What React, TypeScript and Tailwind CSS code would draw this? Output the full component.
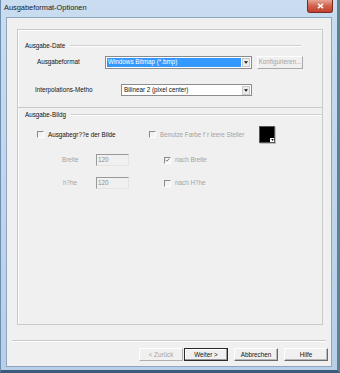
import React from "react";

const font = "font-['Liberation_Sans',Arial,sans-serif]";

function Check({ checked = false }: { checked?: boolean }) {
  return (
    <span className="relative w-[7px] h-[7px] shrink-0 border border-t-[#8a8a8a] border-l-[#8a8a8a] border-b-white border-r-white bg-[#f3f3f3] flex items-center justify-center">
      {checked && (
        <svg viewBox="0 0 6 6" className="w-[6px] h-[6px]">
          <path d="M0.8 2.8 L2.3 4.4 L5.3 1.2" stroke="#7a7a7a" strokeWidth="1.1" fill="none" />
        </svg>
      )}
    </span>
  );
}

function Field({ value }: { value: string }) {
  return (
    <div className="w-[33px] h-[12px] border border-t-[#9a9a9a] border-l-[#9a9a9a] border-b-[#e4e4e4] border-r-[#e4e4e4] bg-[#f0f0f0] flex items-center pl-[1px] text-[6.3px] text-[#8c8c8c]">
      {value}
    </div>
  );
}

function Arrow() {
  return (
    <div className="w-[8px] h-[9px] mr-[1px] bg-[#ececec] border border-[#c8c8c8] flex items-center justify-center shrink-0">
      <svg viewBox="0 0 5 3" className="w-[4px] h-[3px]">
        <path d="M0 0 H5 L2.5 3 Z" fill="#111" />
      </svg>
    </div>
  );
}

function Btn({ label, disabled = false, def = false }: { label: string; disabled?: boolean; def?: boolean }) {
  return (
    <div
      className={`w-[44px] h-[13px] flex items-center justify-center text-[6.3px] border ${
        def
          ? "border-[#2a2a2a] shadow-[inset_-1px_-1px_0_#9a9a9a,inset_1px_1px_0_#fff]"
          : "border-t-white border-l-white border-b-[#6a6a6a] border-r-[#6a6a6a] shadow-[inset_-1px_-1px_0_#b8b8b8]"
      } ${disabled ? "text-[#a3a3a3] border-b-[#b0b0b0] border-r-[#b0b0b0] shadow-none" : "text-[#111]"} bg-[#f0f0f0]`}
    >
      {label}
    </div>
  );
}

export default function App() {
  return (
    <div className={`${font} w-[340px] h-[373px] flex flex-col bg-gradient-to-b from-[#c9dcf0] to-[#b8cfe8] border-l border-l-[#6f8fb0] border-r-[3px] border-r-[#5f7f92] border-b-[3px] border-b-[#3d5a7c]`}>
      {/* Title bar */}
      <div className="h-[17px] flex shrink-0">
        <span className="pl-[3px] pt-[4px] text-[7.4px] text-[#1a1a1a] leading-none">Ausgabeformat-Optionen</span>
        <div className="ml-auto mr-[4px] w-[26px] h-[13px] rounded-b-[3px] border border-t-0 border-[#7a2a22] bg-gradient-to-b from-[#e7a596] via-[#d0604a] to-[#c2412d] flex items-center justify-center">
          <svg viewBox="0 0 8 7" className="w-[7px] h-[6px]">
            <path d="M1 1 L7 6 M7 1 L1 6" stroke="#fff" strokeWidth="1.6" />
          </svg>
        </div>
      </div>

      {/* Client area */}
      <div className="flex-1 flex px-[5px] pb-[3px]">
        <div className="flex-1 bg-[#f0f0f0] border border-[#8ea6c0] flex flex-col">
          {/* Page panel */}
          <div className="mt-[11px] ml-[10px] w-[306px] h-[296px] border border-[#c9c9c9] shadow-[inset_1px_1px_0_#fff] flex flex-col text-[6.3px] text-[#111]">
            {/* Ausgabe-Date */}
            <div className="h-[78px] border-b border-[#c9c9c9] flex flex-col">
              <div className="mt-[11px] h-[10px] flex items-center pl-[7px] pr-[21px]">
                <span>Ausgabe-Date</span>
                <div className="flex-1 ml-[5px] h-[2px] border-t border-[#d0d0d0] border-b-white border-b" />
              </div>
              <div className="mt-[4px] h-[14px] flex items-center">
                <span className="pl-[19px] w-[87px]">Ausgabeformat</span>
                <div className="w-[147px] h-[13px] bg-white border border-[#8c8c8c] flex items-center">
                  <div className="flex-1 h-[9px] ml-[1px] mr-[1px] bg-[#3399ff] text-white flex items-center pl-[1px]">
                    Windows Bitmap (*.bmp)
                  </div>
                  <Arrow />
                </div>
                <div className="ml-[5px] w-[46px] h-[13px] border border-t-white border-l-white border-b-[#a8a8a8] border-r-[#a8a8a8] text-[#a3a3a3] flex items-center justify-center">
                  Konfigurieren...
                </div>
              </div>
              <div className="mt-[15px] h-[12px] flex items-center">
                <span className="pl-[17px] w-[103px]">Interpolations-Metho</span>
                <div className="w-[131px] h-[12px] bg-white border border-[#8c8c8c] flex items-center">
                  <span className="flex-1 pl-[2px]">Bilinear 2 (pixel center)</span>
                  <Arrow />
                </div>
              </div>
            </div>

            {/* Ausgabe-Bildg */}
            <div className="flex-1 flex flex-col">
              <div className="mt-[2px] h-[10px] flex items-center pl-[7px]">
                <span>Ausgabe-Bildg</span>
                <div className="flex-1 ml-[5px] h-[2px] border-t border-[#d0d0d0] border-b-white border-b" />
              </div>
              <div className="mt-[6px] h-[17px] flex items-center">
                <div className="ml-[19px] w-[112px] flex items-center gap-[4px]">
                  <Check />
                  <span>Ausgabegr??e der Bilde</span>
                </div>
                <div className="w-[110px] flex items-center gap-[4px] text-[#a3a3a3]">
                  <Check />
                  <span>Benutze Farbe f¨r leere Steller</span>
                </div>
                <div className="relative w-[16px] h-[17px] bg-black border border-[#555] shadow-[1px_1px_0_#bdbdbd]">
                  <span className="absolute right-[0px] bottom-[0px] w-[4px] h-[4px] bg-white flex items-center justify-center">
                    <svg viewBox="0 0 4 3" className="w-[3px] h-[2px]">
                      <path d="M0 0 H4 L2 3 Z" fill="#000" />
                    </svg>
                  </span>
                </div>
              </div>
              <div className="mt-[11px] h-[12px] flex items-center">
                <span className="pl-[44px] w-[78px] text-[#a3a3a3]">Breite</span>
                <Field value="120" />
                <div className="ml-[35px] flex items-center gap-[4px] text-[#a3a3a3]">
                  <Check checked />
                  <span>nach Breite</span>
                </div>
              </div>
              <div className="mt-[11px] h-[12px] flex items-center">
                <span className="pl-[45px] w-[78px] text-[#a3a3a3]">h?he</span>
                <Field value="120" />
                <div className="ml-[35px] flex items-center gap-[4px] text-[#a3a3a3]">
                  <Check />
                  <span>nach H?he</span>
                </div>
              </div>
            </div>
          </div>

          {/* Separator */}
          <div className="mt-[15px] mx-[5px] h-[2px] border-t border-[#c9c9c9] border-b border-b-white" />

          {/* Buttons */}
          <div className="mt-[6px] flex items-center pl-[132px]">
            <Btn label="< Zurück" disabled />
            <div className="w-[1px]" />
            <Btn label="Weiter >" def />
            <div className="w-[6px]" />
            <Btn label="Abbrechen" />
            <div className="w-[6px]" />
            <Btn label="Hilfe" />
          </div>
        </div>
      </div>
    </div>
  );
}
